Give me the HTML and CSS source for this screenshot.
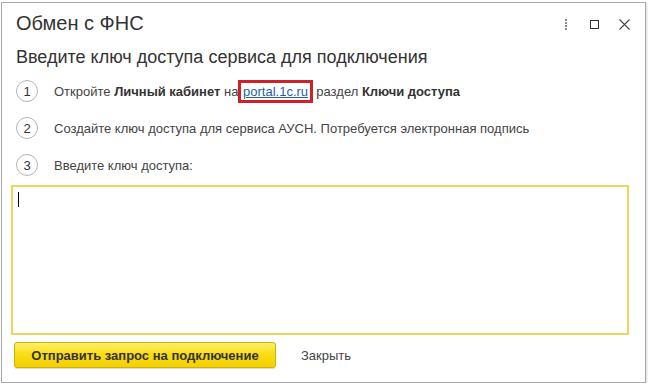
FILE: index.html
```html
<!DOCTYPE html>
<html lang="ru">
<head>
<meta charset="utf-8">
<title>Обмен с ФНС</title>
<link rel="stylesheet" href="styles.css">
</head>
<body>
<div class="window">
  <div class="titlebar">
    <div class="title">Обмен с ФНС</div>
    <div class="controls">
      <svg class="ctl" width="10" height="12" viewBox="0 0 10 12"><g fill="#8a8a8a"><rect x="4" y="0" width="2" height="2"/><rect x="4" y="3" width="2" height="2"/><rect x="4" y="6" width="2" height="2"/><rect x="4" y="9" width="2" height="2"/></g></svg>
      <svg class="ctl" width="10" height="10" viewBox="0 0 10 10"><rect x="0.5" y="0.5" width="8" height="8" fill="none" stroke="#333" stroke-width="1"/></svg>
      <svg class="ctl" width="11" height="11" viewBox="0 0 11 11"><path d="M0.5 0.5 L10.5 10.5 M10.5 0.5 L0.5 10.5" stroke="#444" stroke-width="1.1" fill="none"/></svg>
    </div>
  </div>
  <h1 class="heading">Введите ключ доступа сервиса для подключения</h1>
  <div class="steps">
    <div class="step">
      <span class="num">1</span>
      <span class="text">Откройте <b>Личный кабинет</b> на <a class="link" href="#">portal.1c.ru</a>, раздел <b>Ключи доступа</b></span>
    </div>
    <div class="step">
      <span class="num">2</span>
      <span class="text">Создайте ключ доступа для сервиса АУСН. Потребуется электронная подпись</span>
    </div>
    <div class="step">
      <span class="num">3</span>
      <span class="text">Введите ключ доступа:</span>
    </div>
  </div>
  <div class="keybox"><span class="caret"></span></div>
  <div class="footer">
    <button class="primary">Отправить запрос на подключение</button>
    <span class="close">Закрыть</span>
  </div>
</div>
</body>
</html>
```

FILE: styles.css
```css
html, body {
  margin: 0;
  padding: 0;
  background: #ffffff;
}
body {
  font-family: "Liberation Sans", Arial, sans-serif;
  color: #333;
}
.window {
  margin: 2px 0 0 1px;
  width: 645px;
  height: 381px;
  border: 1px solid #a9a9a9;
  box-shadow: 1px 1px 2px rgba(0,0,0,0.15);
  background: #fff;
  box-sizing: border-box;
  display: flex;
  flex-direction: column;
}
.titlebar {
  display: flex;
  align-items: center;
  justify-content: space-between;
  padding: 9px 15px 0 14px;
  height: 23px;
}
.title {
  font-size: 20px;
  line-height: 23px;
  color: #333;
}
.controls {
  display: flex;
  align-items: center;
  gap: 19px;
  margin-top: 2px;
}
.heading {
  margin: 12px 0 0 14px;
  font-size: 18px;
  font-weight: normal;
  line-height: 21px;
  color: #333;
}
.steps {
  display: flex;
  flex-direction: column;
  gap: 15px;
  margin: 12px 0 0 14px;
}
.step {
  display: flex;
  align-items: center;
  height: 22px;
}
.num {
  width: 20px;
  height: 20px;
  border: 1px solid #b5b5b5;
  border-radius: 50%;
  display: flex;
  align-items: center;
  justify-content: center;
  font-size: 13px;
  color: #333;
  margin-right: 16px;
  flex: none;
}
.text {
  font-size: 13px;
  color: #444;
}
.text b {
  color: #333;
}
.link {
  color: #1f5fa8;
  text-decoration: underline;
  outline: 3px solid #d0202a;
  outline-offset: 1px;
  padding: 0 1px;
}
.keybox {
  margin: 9px 0 0 9px;
  width: 618px;
  height: 150px;
  border: 2px solid #f0d35e;
  box-sizing: border-box;
  padding: 5px 0 0 5px;
}
.caret {
  display: block;
  width: 1px;
  height: 15px;
  background: #000;
}
.footer {
  display: flex;
  align-items: center;
  margin: 7px 0 0 12px;
}
.primary {
  font-family: "Liberation Sans", Arial, sans-serif;
  font-size: 13px;
  font-weight: bold;
  color: #333;
  height: 26px;
  width: 262px;
  border: 1px solid #d2b100;
  border-radius: 3px;
  background: linear-gradient(#ffef6e, #fadd16 45%, #f3d000);
  box-shadow: 0 1px 1px rgba(0,0,0,0.15);
  padding: 0;
}
.close {
  margin-left: 25px;
  font-size: 13px;
  color: #444;
}
```
